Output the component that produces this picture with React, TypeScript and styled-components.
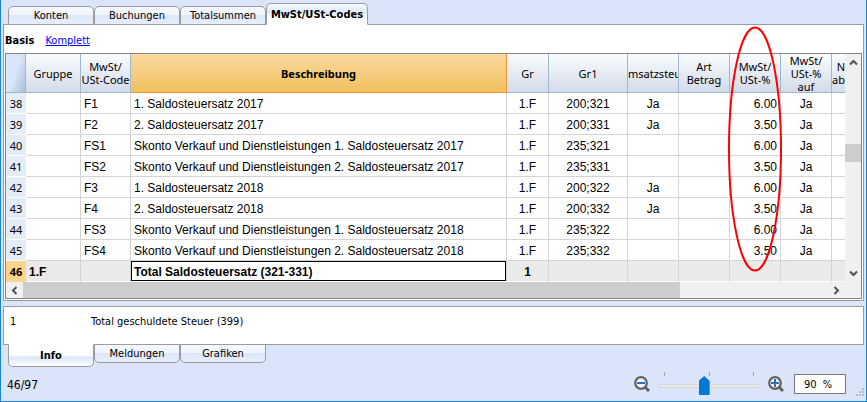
import React, { useState } from "react";
import styled, { createGlobalStyle, css } from "styled-components";

const GlobalStyle = createGlobalStyle`
  * { box-sizing: border-box; }
  body { margin: 0; background: #dae5f9; }
  button, input { margin: 0; font: inherit; color: inherit; }
`;

const UI = `"DejaVu Sans Condensed", "DejaVu Sans", Tahoma, sans-serif`;
const HEAD = `"Noto Sans", "Open Sans", sans-serif`;
const DATA = `"Liberation Sans", Arial, sans-serif`;

const Window = styled.main`
  display: flex;
  flex-direction: column;
  min-height: 100vh;
  padding: 3px 2px 0;
  border: solid #1883d7;
  border-width: 0 1px 1px;
  background: #dae5f9;
  font: 11px/14px ${UI};
  color: #000;
`;

const TopTabs = styled.nav`
  display: flex;
  align-items: flex-end;
  height: 22px;
  padding-left: 5px;
  margin-bottom: -1px;
  position: relative;
  z-index: 1;
`;

const BottomTabs = styled(TopTabs)`
  align-items: flex-start;
  margin: -1px 0 0;
  height: 23px;
`;

const Tab = styled.button<{ $active?: boolean; $bottom?: boolean; $wide?: boolean }>`
  width: ${(p) => (p.$wide ? 102 : 86)}px;
  height: ${(p) => (p.$active ? (p.$bottom ? 23 : 22) : 19)}px;
  padding: 1px 0 0;
  border: 1px solid #9c9c9c;
  border-radius: ${(p) => (p.$bottom ? "0 0 5px 5px" : "5px 5px 0 0")};
  background: linear-gradient(#f5f8fe 0%, #f0f5fe 45%, #dce7fb 50%, #e6eefc 100%);
  font-size: 11px;
  line-height: 14px;
  white-space: nowrap;
  ${(p) =>
    p.$active &&
    css`
      font-weight: 700;
      background: ${p.$bottom
        ? "linear-gradient(#fff 45%, #dce7fb 60%, #fff 100%)"
        : "linear-gradient(#f5f8fe 0%, #dce7fb 45%, #fff 55%)"};
      border-${p.$bottom ? "top" : "bottom"}-color: #fff;
    `}
`;

const Panel = styled.section`
  position: relative;
  border: 1px solid #9c9c9c;
  background: #fff;
`;

const Views = styled.div`
  display: flex;
  align-items: center;
  gap: 11px;
  height: 28px;
  padding: 4px 1px 0;
`;

const ViewLink = styled.a<{ $current?: boolean }>`
  color: ${(p) => (p.$current ? "#000" : "#00f")};
  font-weight: ${(p) => (p.$current ? 700 : 400)};
  text-decoration: ${(p) => (p.$current ? "none" : "underline")};
`;

const GridFrame = styled.div`
  display: grid;
  grid-template-columns: minmax(0, 1fr) 16px;
  margin: 0 1px 1px;
  border: 1px solid #828790;
  background: #fff;
`;

const Viewport = styled.div`
  overflow: hidden;
`;

const Table = styled.table`
  width: 100%;
  table-layout: fixed;
  border-collapse: separate;
  border-spacing: 0;
`;

const Col = styled.col<{ $w?: number }>`
  width: ${(p) => (p.$w ? `${p.$w}px` : "auto")};
`;

const Head = styled.th<{ $selected?: boolean; $clipped?: boolean }>`
  height: 39px;
  padding: 0;
  overflow: hidden;
  border: solid ${(p) => (p.$selected ? "#f29536" : "#9eb6ce")};
  border-width: 0 ${(p) => (p.$clipped ? 0 : 1)}px 1px 0;
  background: ${(p) =>
    p.$selected ? "linear-gradient(#f9d99f, #f1c15f)" : "linear-gradient(#f9fcfd, #d3dbe9)"};
  font-family: ${HEAD};
  font-size: 11px;
  font-weight: ${(p) => (p.$selected ? 700 : 400)};
  text-align: ${(p) => (p.$clipped ? "right" : "center")};
`;

const Corner = styled.td`
  border: solid #9eb6ce;
  border-width: 0 1px 1px 0;
  background: linear-gradient(110deg, #dae5f9 50%, #a9c0d8);
`;

const HeadText = styled.div`
  max-height: 38px;
  line-height: 13px;
  white-space: nowrap;
`;

const RowHead = styled.th<{ $selected?: boolean }>`
  height: 21px;
  padding: 2px 0 0;
  border: solid ${(p) => (p.$selected ? "#ffd58d" : "#fff")};
  border-width: 0 0 1px;
  background: ${(p) => (p.$selected ? "#ffd58d" : "#e4ecf7")};
  font-family: ${HEAD};
  font-size: 11px;
  font-weight: ${(p) => (p.$selected ? 700 : 400)};
`;

const Cell = styled.td<{ $align?: "center" | "right"; $total?: boolean; $focus?: boolean }>`
  height: 21px;
  padding: 2px 3px 0;
  overflow: hidden;
  border: solid #d4d4d4;
  border-width: 0 1px 1px 0;
  background: ${(p) => (p.$total ? "#eaeaea" : "#fff")};
  font: ${(p) => (p.$total ? 700 : 400)} 12px/16px ${DATA};
  text-align: ${(p) => p.$align ?? "left"};
  white-space: nowrap;
  &:last-child { border-right: 0; }
  ${(p) => p.$total && css`border-bottom-color: #fff;`}
  ${(p) =>
    p.$focus &&
    css`
      background: #fff;
      box-shadow: inset 0 0 0 1px #000;
    `}
`;

const VScroll = styled.div`
  display: flex;
  flex-direction: column;
  background: #f0f0f0;
`;

const HScroll = styled.div`
  display: flex;
  height: 16px;
  background: #f0f0f0;
`;

const ScrollButton = styled.button`
  display: grid;
  place-items: center;
  flex: none;
  width: 17px;
  height: 17px;
  padding: 0;
  border: 0;
  background: transparent;
`;

const Track = styled.div<{ $vertical?: boolean }>`
  display: grid;
  flex: 1;
  ${(p) =>
    p.$vertical
      ? "grid-template-rows: 73fr 18fr 102fr;"
      : "grid-template-columns: 0 657fr 148fr;"}
`;

const Thumb = styled.div<{ $vertical?: boolean }>`
  background: #cdcdcd;
  ${(p) => (p.$vertical ? "grid-row: 2;" : "grid-column: 2;")}
`;

const ScrollCorner = styled.div`
  background: #f0f0f0;
`;

const Mark = styled.svg`
  position: absolute;
  top: 1px;
  right: 80px;
  pointer-events: none;
`;

const InfoPanel = styled(Panel)`
  display: grid;
  grid-template-columns: 81px 1fr;
  height: 39px;
  margin-top: 5px;
  padding: 8px 6px;
`;

const Status = styled.footer`
  display: flex;
  align-items: center;
  justify-content: space-between;
  height: 34px;
  padding-left: 4px;
`;

const Count = styled.span`
  padding-top: 2px;
  font-size: 12px;
`;

const Zoom = styled.div`
  display: flex;
  align-items: center;
`;

const ZoomButton = styled.button`
  display: flex;
  width: 18px;
  height: 18px;
  padding: 1px;
  border: 0;
  background: transparent;
`;

const SliderBox = styled.label`
  display: flex;
  flex-direction: column;
  width: 100px;
  height: 24px;
  margin: 0 8px;
`;

const Ticks = styled.span`
  display: flex;
  justify-content: space-between;
  height: 5px;
  padding: 0 5px;
`;

const Tick = styled.span`
  width: 1px;
  background: #a3a3a3;
`;

const Slider = styled.input`
  appearance: none;
  width: 100%;
  height: 25px;
  background: transparent;
  &::-webkit-slider-runnable-track {
    height: 4px;
    border: 1px solid #d6d6d6;
    background: #e7eaea;
  }
  &::-webkit-slider-thumb {
    appearance: none;
    width: 11px;
    height: 19px;
    margin-top: -9px;
    background: #0078d7;
    clip-path: polygon(50% 0, 100% 26%, 100% 100%, 0 100%, 0 26%);
  }
`;

const Percent = styled.input`
  width: 52px;
  height: 20px;
  margin-left: 9px;
  padding: 1px 0 0 9px;
  border: 1px solid #7a7a7a;
  background: #fff;
`;

const Grip = styled.svg`
  align-self: flex-end;
  margin-left: 10px;
`;

const Chevron = ({ d }: { d: string }) => (
  <svg width="9" height="9" viewBox="0 0 9 9" fill="none" stroke="#505050" strokeWidth="2" aria-hidden="true">
    <path d={d} />
  </svg>
);

const Lens = ({ plus }: { plus?: boolean }) => (
  <svg width="16" height="16" viewBox="0 0 16 16" fill="none" aria-hidden="true">
    <circle cx="7" cy="7" r="5.8" fill="#eef4fb" stroke="#636363" strokeWidth="2.2" />
    <path d="M11 11L15 15" stroke="#636363" strokeWidth="3" />
    <path d={plus ? "M3 7H11M7 3V11" : "M3 7H11"} stroke="#2f6eb5" strokeWidth="2" />
  </svg>
);

type Column = { lines: string[]; width?: number; selected?: boolean; clipped?: boolean; align?: "center" | "right" };

const columns: Column[] = [
  { lines: ["Gruppe"], width: 55 },
  { lines: ["MwSt/", "USt-Code"], width: 50 },
  { lines: ["Beschreibung"], selected: true },
  { lines: ["Gr"], width: 42, align: "center" },
  { lines: ["Gr1"], width: 79, align: "center" },
  { lines: ["msatzsteu"], width: 51, align: "center" },
  { lines: ["Art", "Betrag"], width: 51 },
  { lines: ["MwSt/", "USt-%"], width: 51, align: "right" },
  { lines: ["MwSt/", "USt-%", "auf"], width: 51, align: "center" },
  { lines: ["N", "ab"], width: 13, clipped: true },
];

const skonto = "Skonto Verkauf und Dienstleistungen ";
const rows: [number, ...string[]][] = [
  [38, "", "F1", "1. Saldosteuersatz 2017", "1.F", "200;321", "Ja", "", "6.00", "Ja", ""],
  [39, "", "F2", "2. Saldosteuersatz 2017", "1.F", "200;331", "Ja", "", "3.50", "Ja", ""],
  [40, "", "FS1", skonto + "1. Saldosteuersatz 2017", "1.F", "235;321", "", "", "6.00", "Ja", ""],
  [41, "", "FS2", skonto + "2. Saldosteuersatz 2017", "1.F", "235;331", "", "", "3.50", "Ja", ""],
  [42, "", "F3", "1. Saldosteuersatz 2018", "1.F", "200;322", "Ja", "", "6.00", "Ja", ""],
  [43, "", "F4", "2. Saldosteuersatz 2018", "1.F", "200;332", "Ja", "", "3.50", "Ja", ""],
  [44, "", "FS3", skonto + "1. Saldosteuersatz 2018", "1.F", "235;322", "", "", "6.00", "Ja", ""],
  [45, "", "FS4", skonto + "2. Saldosteuersatz 2018", "1.F", "235;332", "", "", "3.50", "Ja", ""],
  [46, "1.F", "", "Total Saldosteuersatz (321-331)", "1", "", "", "", "", "", ""],
];

export default function App() {
  const [zoom, setZoom] = useState(90);
  return (
    <>
      <GlobalStyle />
      <Window>
        <TopTabs aria-label="Tabellen">
          <Tab>Konten</Tab>
          <Tab>Buchungen</Tab>
          <Tab>Totalsummen</Tab>
          <Tab $active $wide>MwSt/USt-Codes</Tab>
        </TopTabs>
        <Panel>
          <Views>
            <ViewLink $current href="#basis">Basis</ViewLink>
            <ViewLink href="#komplett">Komplett</ViewLink>
          </Views>
          <GridFrame>
            <Viewport>
              <Table>
                <colgroup>
                  <Col $w={20} />
                  {columns.map((c, i) => <Col key={i} $w={c.width} />)}
                </colgroup>
                <thead>
                  <tr>
                    <Corner />
                    {columns.map((c, i) => (
                      <Head key={i} scope="col" $selected={c.selected} $clipped={c.clipped}>
                        <HeadText>
                          {c.lines.map((line) => <div key={line}>{line}</div>)}
                        </HeadText>
                      </Head>
                    ))}
                  </tr>
                </thead>
                <tbody>
                  {rows.map(([no, ...cells]) => (
                    <tr key={no}>
                      <RowHead scope="row" $selected={no === 46}>{no}</RowHead>
                      {cells.map((text, i) => (
                        <Cell key={i} $align={columns[i].align} $total={no === 46} $focus={no === 46 && i === 2}>
                          {text}
                        </Cell>
                      ))}
                    </tr>
                  ))}
                </tbody>
              </Table>
            </Viewport>
            <VScroll>
              <ScrollButton aria-label="Nach oben"><Chevron d="M1 6.5L4.5 3L8 6.5" /></ScrollButton>
              <Track $vertical><Thumb $vertical /></Track>
              <ScrollButton aria-label="Nach unten"><Chevron d="M1 2.5L4.5 6L8 2.5" /></ScrollButton>
            </VScroll>
            <HScroll>
              <ScrollButton aria-label="Nach links"><Chevron d="M6.5 1L3 4.5L6.5 8" /></ScrollButton>
              <Track><Thumb /></Track>
              <ScrollButton aria-label="Nach rechts"><Chevron d="M2.5 1L6 4.5L2.5 8" /></ScrollButton>
            </HScroll>
            <ScrollCorner />
          </GridFrame>
          <Mark width="56" height="246" viewBox="0 0 56 246" fill="none" aria-hidden="true">
            <ellipse cx="28" cy="123" rx="26" ry="121.5" stroke="#f00" strokeWidth="2" />
          </Mark>
        </Panel>
        <InfoPanel>
          <span>1</span>
          <span>Total geschuldete Steuer (399)</span>
        </InfoPanel>
        <BottomTabs aria-label="Bereiche">
          <Tab $bottom $active>Info</Tab>
          <Tab $bottom>Meldungen</Tab>
          <Tab $bottom>Grafiken</Tab>
        </BottomTabs>
        <Status>
          <Count>46/97</Count>
          <Zoom>
            <ZoomButton aria-label="Verkleinern" onClick={() => setZoom(Math.max(10, zoom - 10))}><Lens /></ZoomButton>
            <SliderBox>
              <Ticks><Tick /><Tick /><Tick /></Ticks>
              <Slider
                type="range"
                aria-label="Zoom"
                min={10}
                max={190}
                value={zoom}
                onChange={(e) => setZoom(Number(e.target.value))}
              />
            </SliderBox>
            <ZoomButton aria-label="Vergrössern" onClick={() => setZoom(Math.min(190, zoom + 10))}><Lens plus /></ZoomButton>
            <Percent aria-label="Zoomstufe" readOnly value={`${zoom}\u00a0\u00a0%`} />
            <Grip width="8" height="8" viewBox="0 0 8 8" fill="#b5bac4" aria-hidden="true">
              <path d="M6 0h2v2H6zM3 3h2v2H3zM6 3h2v2H6zM0 6h2v2H0zM3 6h2v2H3zM6 6h2v2H6z" />
            </Grip>
          </Zoom>
        </Status>
      </Window>
    </>
  );
}
